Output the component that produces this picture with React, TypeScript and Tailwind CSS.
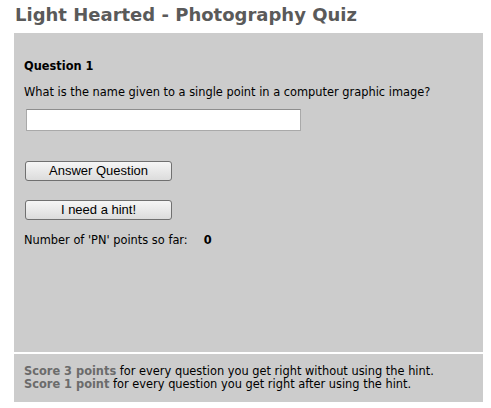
export default function App() {
  return (
    <div className="w-[491px] h-[408px] bg-white font-['DejaVu_Sans',Verdana,sans-serif] overflow-hidden">
      <h1 className="pl-[15px] pt-[3px] h-[33px] text-[18px] font-bold text-[#5a5a5a] leading-[24px]">
        Light Hearted - Photography Quiz
      </h1>

      {/* Quiz panel */}
      <div className="ml-[14px] w-[469px] h-[319px] bg-[#cccccc] pl-[10px] pt-[26px] text-[11.4px] text-black">
        <div className="font-bold leading-[14px]">Question 1</div>
        <p className="mt-[12px] leading-[14px]">What is the name given to a single point in a computer graphic image?</p>
        <input
          type="text"
          className="mt-[10px] ml-[2px] block w-[275px] h-[22px] bg-white border border-[#a9a9a9] border-t-[#8e8e8e]"
        />
        <button className="mt-[30px] ml-px block w-[147px] h-[20px] rounded-[3px] border border-[#707070] bg-gradient-to-b from-[#f6f6f6] to-[#dcdcdc] text-[13px] leading-[18px] font-['Liberation_Sans',Arial,sans-serif] text-black">
          Answer Question
        </button>
        <button className="mt-[19px] ml-px block w-[147px] h-[20px] rounded-[3px] border border-[#707070] bg-gradient-to-b from-[#f6f6f6] to-[#dcdcdc] text-[13px] leading-[18px] font-['Liberation_Sans',Arial,sans-serif] text-black">
          I need a hint!
        </button>
        <div className="mt-[13px] flex leading-[14px]">
          <span>Number of 'PN' points so far:</span>
          <span className="ml-[16px] font-bold">0</span>
        </div>
      </div>

      {/* Footer */}
      <div className="mt-[2px] ml-[14px] w-[469px] h-[48px] bg-[#cccccc] pl-[10px] pt-[11px] text-[11.4px] leading-[13px] text-black">
        <div>
          <span className="font-bold text-[#6b6b6b]">Score 3 points</span> for every question you get right without using the hint.
        </div>
        <div>
          <span className="font-bold text-[#6b6b6b]">Score 1 point</span> for every question you get right after using the hint.
        </div>
      </div>
    </div>
  );
}
